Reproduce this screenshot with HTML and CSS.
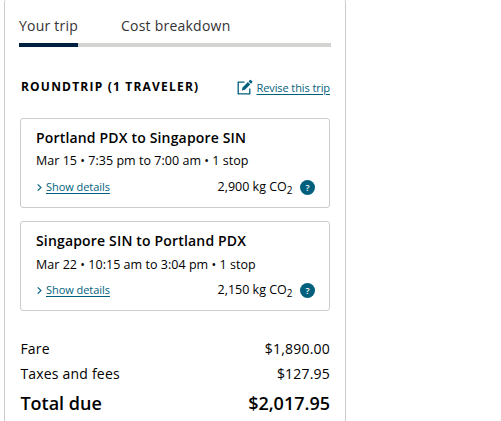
FILE: index.html
```html
<!DOCTYPE html>
<html lang="en">
<head>
  <meta charset="UTF-8" />
  <title>Trip Summary</title>
  <link rel="stylesheet" href="styles.css">
</head>
<body>
  <div class="summary">
    <div class="tabs">
      <a class="tab active">Your trip</a>
      <a class="tab">Cost breakdown</a>
    </div>

    <div class="trip-header">
      <h2>Roundtrip (1 traveler)</h2>
      <div class="revise">
        <svg width="16" height="16" viewBox="0 0 16 16">
          <path d="M7.5 3.2H1.2V14.8H12.8V9.5" fill="none" stroke="currentColor" stroke-width="1.3" />
          <path d="M4.8 11.6L5.6 8.4L10.9 3.1L13.2 5.4L7.9 10.7Z" fill="currentColor" />
          <path d="M11.6 2.4L12.9 1.1Q13.5 0.6 14.1 1.2L15.1 2.2Q15.7 2.8 15.1 3.4L13.9 4.7Z" fill="currentColor" />
        </svg>
        <a class="link">Revise this trip</a>
      </div>
    </div>

    <div class="flight">
      <h3>Portland PDX to Singapore SIN</h3>
      <p class="times">Mar 15 • 7:35 pm to 7:00 am • 1 stop</p>
      <div class="row">
        <div class="details">
          <svg width="5" height="8" viewBox="0 0 5 8"><path d="M0.7 1.3L4 4.5L0.7 7.7" fill="none" stroke="currentColor" stroke-width="1.1" /></svg>
          <a class="link">Show details</a>
        </div>
        <div class="carbon">
          <span>2,900 kg CO<sub>2</sub></span>
          <span class="help">?</span>
        </div>
      </div>
    </div>

    <div class="flight">
      <h3>Singapore SIN to Portland PDX</h3>
      <p class="times return">Mar 22 • 10:15 am to 3:04 pm • 1 stop</p>
      <div class="row">
        <div class="details">
          <svg width="5" height="8" viewBox="0 0 5 8"><path d="M0.7 1.3L4 4.5L0.7 7.7" fill="none" stroke="currentColor" stroke-width="1.1" /></svg>
          <a class="link">Show details</a>
        </div>
        <div class="carbon">
          <span>2,150 kg CO<sub>2</sub></span>
          <span class="help">?</span>
        </div>
      </div>
    </div>

    <div class="costs">
      <div class="cost"><span>Fare</span><span class="amount">$1,890.00</span></div>
      <div class="cost"><span>Taxes and fees</span><span class="amount">$127.95</span></div>
      <div class="cost total"><span>Total due</span><span class="amount">$2,017.95</span></div>
    </div>
  </div>
</body>
</html>
```
FILE: styles.css
```css
:root {
  --link: #005f7d;
  --line: #cccccc;
}

* {
  box-sizing: border-box;
}

body {
  margin: 0;
  height: 421px;
  overflow: hidden;
  background: #fff;
  color: #000;
  font-family: 'Open Sans', sans-serif;
  white-space: nowrap;
}

h2, h3, p {
  margin: 0;
}

.summary {
  width: 342px;
  height: 440px;
  margin-left: 4px;
  padding: 16px 15px 0 14px;
  border: 1px solid var(--line);
  border-top: none;
  border-radius: 2px;
}

.tabs {
  display: flex;
  gap: 43px;
  height: 31px;
  width: 312px;
  box-shadow: inset 0 -4px #d3d4d2;
}

.tab {
  height: 31px;
  font-size: 14px;
  line-height: 20px;
  letter-spacing: 0.23px;
  color: #333;
}

.tab.active {
  width: 59px;
  border-bottom: 4px solid #00203f;
}

.trip-header {
  display: flex;
  justify-content: space-between;
  align-items: center;
  height: 20px;
  margin: 30px 0 21px 2px;
}

h2 {
  font-size: 12px;
  font-weight: 700;
  line-height: 20px;
  letter-spacing: 1.2px;
  text-transform: uppercase;
}

.revise {
  display: flex;
  align-items: center;
  gap: 3px;
  color: var(--link);
}

.revise .link {
  padding-top: 2px;
  letter-spacing: -0.09px;
}

.link {
  font-size: 11px;
  line-height: 16px;
  letter-spacing: -0.05px;
  color: var(--link);
  text-decoration: underline;
  text-underline-offset: 2px;
}

.flight {
  height: 90px;
  width: 310px;
  margin: 0 0 13px 1px;
  padding: 9px 14px 0 15px;
  border: 1px solid var(--line);
  border-radius: 3px;
}

h3 {
  font-size: 14px;
  font-weight: 600;
  line-height: 20px;
  letter-spacing: 0.17px;
}

.times {
  margin-top: 3px;
  font-size: 12.5px;
  line-height: 20px;
  letter-spacing: 0.03px;
}

.times.return {
  margin: 4px 0 -1px;
}

.row {
  display: flex;
  justify-content: space-between;
  align-items: center;
  height: 20px;
  margin-top: 6px;
}

.details {
  display: flex;
  align-items: center;
  gap: 4px;
  padding-left: 1px;
  color: var(--link);
}

.carbon {
  display: flex;
  align-items: center;
  gap: 7.5px;
  font-size: 12.5px;
  line-height: 20px;
}

sub {
  position: relative;
  top: -1px;
  font-size: 10px;
  line-height: 0;
}

.help {
  width: 15px;
  height: 15px;
  border-radius: 50%;
  background: var(--link);
  color: #fff;
  font-size: 9px;
  font-weight: 600;
  line-height: 15px;
  text-align: center;
}

.costs {
  width: 310px;
  margin: 25px 0 0 1px;
}

.cost {
  display: flex;
  justify-content: space-between;
  padding-left: 0.4px;
  font-size: 14px;
  line-height: 25px;
  letter-spacing: 0.2px;
}

.total {
  padding-top: 2px;
  font-size: 18px;
  font-weight: 600;
  line-height: 30px;
  letter-spacing: 0;
}
```
